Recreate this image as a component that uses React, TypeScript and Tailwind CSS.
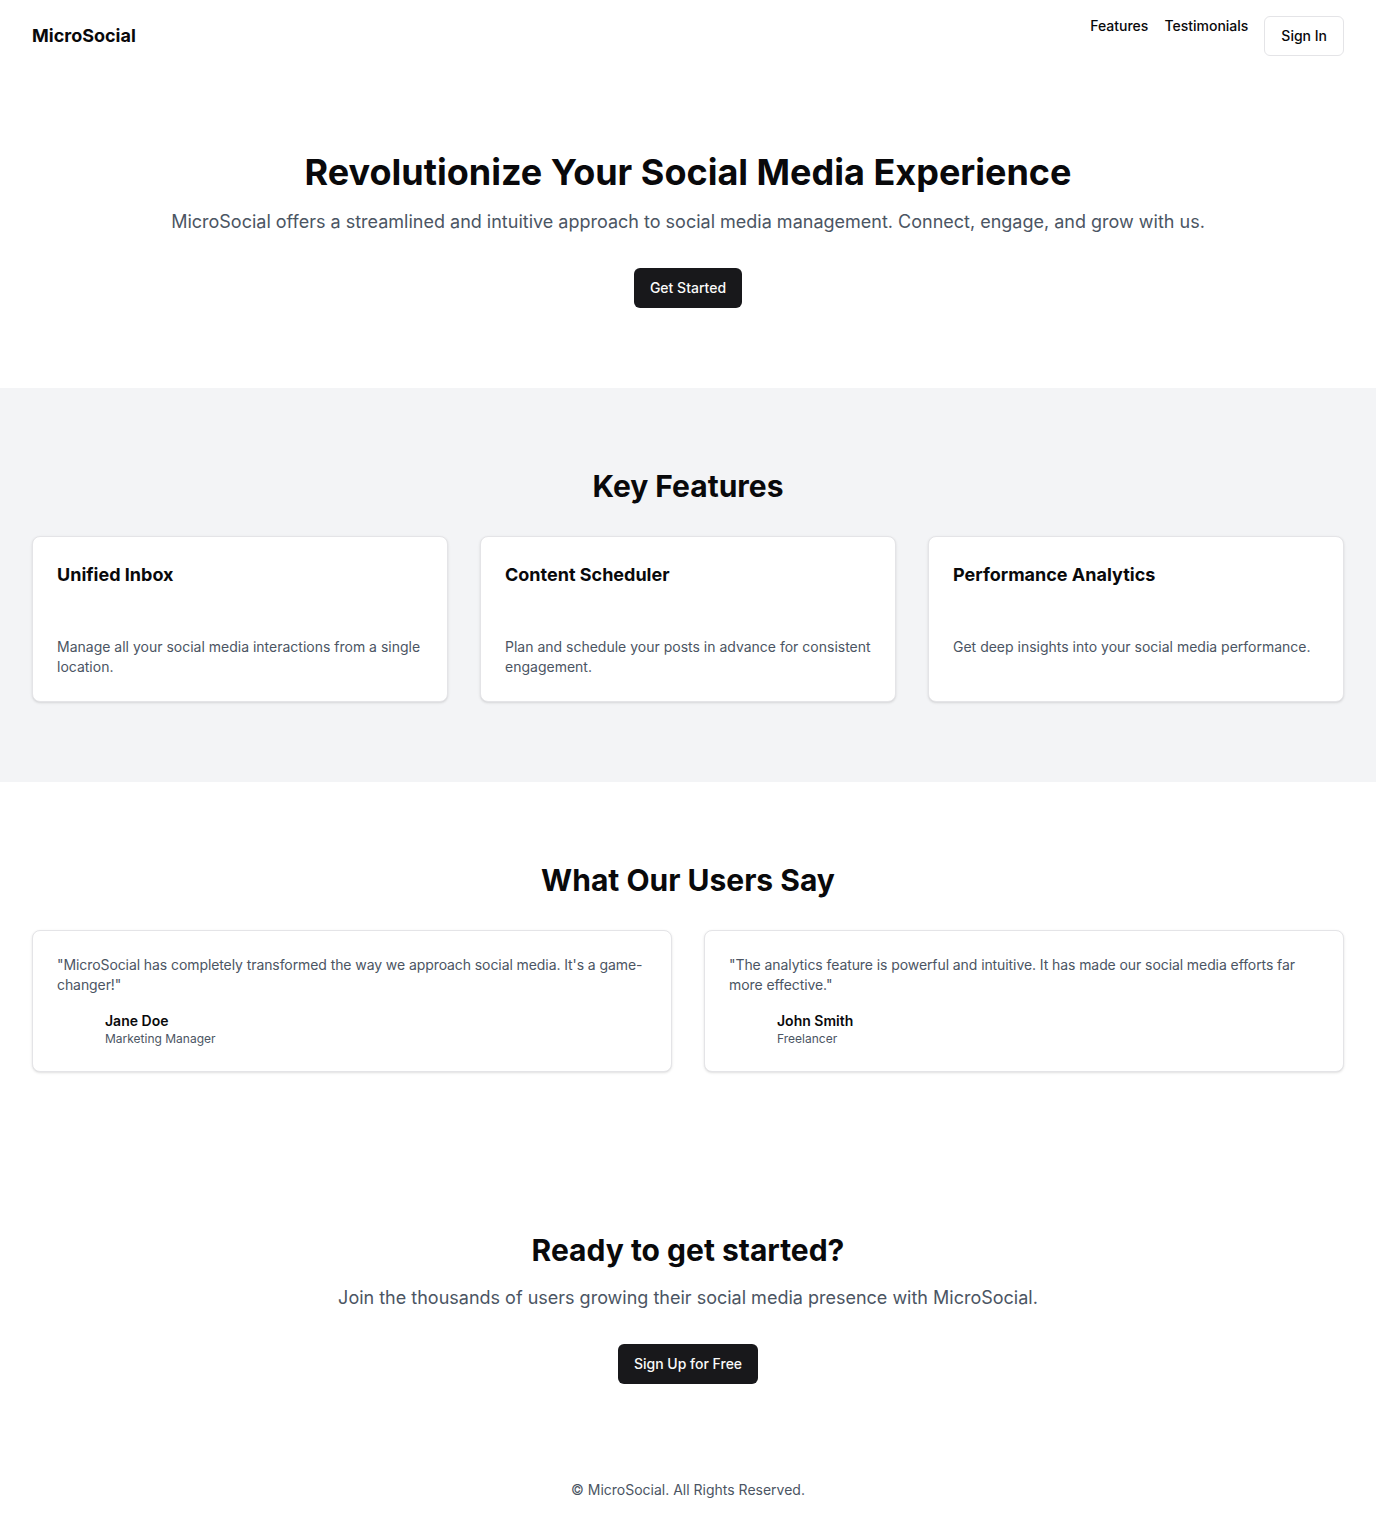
import React from "react";

const features = [
  {
    title: "Unified Inbox",
    text: "Manage all your social media interactions from a single location.",
  },
  {
    title: "Content Scheduler",
    text: "Plan and schedule your posts in advance for consistent engagement.",
  },
  {
    title: "Performance Analytics",
    text: "Get deep insights into your social media performance.",
  },
];

const testimonials = [
  {
    quote:
      "\"MicroSocial has completely transformed the way we approach social media. It's a game-changer!\"",
    name: "Jane Doe",
    role: "Marketing Manager",
  },
  {
    quote:
      "\"The analytics feature is powerful and intuitive. It has made our social media efforts far more effective.\"",
    name: "John Smith",
    role: "Freelancer",
  },
];

export default function App() {
  return (
    <div className="min-h-screen bg-white text-[#09090b] font-['Inter',sans-serif]">
      {/* header */}
      <header className="flex items-center justify-between px-8 py-4">
        <span className="text-lg font-bold">MicroSocial</span>
        <nav className="flex items-start gap-4">
          <a className="text-sm font-medium leading-5">Features</a>
          <a className="text-sm font-medium leading-5">Testimonials</a>
          <button className="h-10 px-4 rounded-md border border-[#e4e4e7] bg-white text-sm font-medium">
            Sign In
          </button>
        </nav>
      </header>

      {/* hero */}
      <section className="py-20 px-8 flex flex-col items-center text-center">
        <h1 className="text-4xl font-bold">
          Revolutionize Your Social Media Experience
        </h1>
        <p className="mt-4 text-lg leading-7 text-[#4b5563]">
          MicroSocial offers a streamlined and intuitive approach to social media
          management. Connect, engage, and grow with us.
        </p>
        <button className="mt-8 h-10 px-4 rounded-md bg-[#18181b] text-[#fafafa] text-sm font-medium">
          Get Started
        </button>
      </section>

      {/* features */}
      <section className="bg-[#f3f4f6] py-20 px-8">
        <h2 className="text-3xl font-bold text-center">Key Features</h2>
        <div className="mt-8 grid grid-cols-3 gap-8">
          {features.map((f) => (
            <div
              key={f.title}
              className="rounded-lg border border-[#e4e4e7] bg-white shadow-sm"
            >
              <div className="p-6">
                <h3 className="text-lg font-bold leading-7">{f.title}</h3>
              </div>
              <div className="p-6">
                <p className="text-sm text-[#4b5563]">{f.text}</p>
              </div>
            </div>
          ))}
        </div>
      </section>

      {/* testimonials */}
      <section className="py-20 px-8">
        <h2 className="text-3xl font-bold text-center">What Our Users Say</h2>
        <div className="mt-8 grid grid-cols-2 gap-8">
          {testimonials.map((t) => (
            <div
              key={t.name}
              className="rounded-lg border border-[#e4e4e7] bg-white shadow-sm p-6"
            >
              <p className="text-sm tracking-[-0.006em] text-[#4b5563]">{t.quote}</p>
              <div className="mt-4 flex items-center gap-2">
                <div className="w-10" />
                <div>
                  <p className="text-sm font-semibold leading-5">{t.name}</p>
                  <p className="text-xs text-[#4b5563] leading-4">{t.role}</p>
                </div>
              </div>
            </div>
          ))}
        </div>
      </section>

      {/* cta */}
      <section className="py-20 px-8 flex flex-col items-center text-center">
        <h2 className="text-3xl font-bold">Ready to get started?</h2>
        <p className="mt-4 text-lg leading-7 text-[#4b5563]">
          Join the thousands of users growing their social media presence with
          MicroSocial.
        </p>
        <button className="mt-8 h-10 px-4 rounded-md bg-[#18181b] text-[#fafafa] text-sm font-medium">
          Sign Up for Free
        </button>
      </section>

      <footer className="py-4 text-center">
        <p className="text-sm text-[#4b5563]">© MicroSocial. All Rights Reserved.</p>
      </footer>
    </div>
  );
}
